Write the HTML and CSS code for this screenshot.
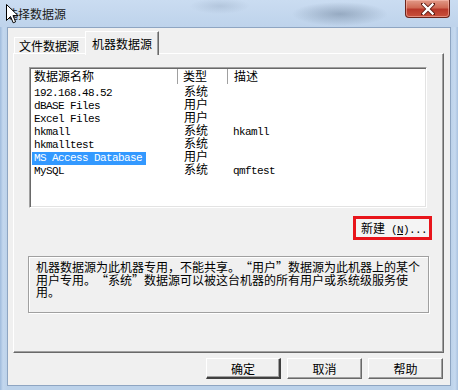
FILE: index.html
```html
<!DOCTYPE html>
<html lang="zh-CN">
<head>
<meta charset="utf-8">
<title>选择数据源</title>
<link rel="stylesheet" href="styles.css">
</head>
<body>
<div class="window">
  <div class="titlebar">
    <span class="title">选择数据源</span>
    <div class="closebtn">
      <svg width="14" height="12" viewBox="0 0 14 12">
        <path d="M2 1 L12 11 M12 1 L2 11" stroke="#5a1a12" stroke-width="4" stroke-linecap="square"/>
        <path d="M2.5 1.5 L11.5 10.5 M11.5 1.5 L2.5 10.5" stroke="#ffffff" stroke-width="2.4" stroke-linecap="square"/>
      </svg>
    </div>
    <svg class="cursor" width="13" height="20" viewBox="0 0 13 20">
      <path d="M0.5 0.5 L0.5 16.5 L4.5 12.5 L7.2 18.8 L9.6 17.8 L7 11.6 L12 11.6 Z" fill="#fff" stroke="#000" stroke-width="1"/>
    </svg>
  </div>
  <div class="client">
    <div class="tabs">
      <div class="tab">文件数据源</div>
      <div class="tab active">机器数据源</div>
    </div>
    <div class="panel">
      <div class="list">
        <div class="lhead">
          <div class="c1">数据源名称</div>
          <div class="c2">类型</div>
          <div class="c3">描述</div>
        </div>
        <div class="row"><div class="c1"><span class="a nm">192.168.48.52</span></div><div class="c2">系统</div><div class="c3"></div></div>
        <div class="row"><div class="c1"><span class="a nm">dBASE Files</span></div><div class="c2">用户</div><div class="c3"></div></div>
        <div class="row"><div class="c1"><span class="a nm">Excel Files</span></div><div class="c2">用户</div><div class="c3"></div></div>
        <div class="row"><div class="c1"><span class="a nm">hkmall</span></div><div class="c2">系统</div><div class="c3"><span class="a">hkamll</span></div></div>
        <div class="row"><div class="c1"><span class="a nm">hkmalltest</span></div><div class="c2">系统</div><div class="c3"></div></div>
        <div class="row"><div class="c1"><span class="a nm sel">MS Access Database</span></div><div class="c2">用户</div><div class="c3"></div></div>
        <div class="row"><div class="c1"><span class="a nm">MySQL</span></div><div class="c2">系统</div><div class="c3"><span class="a">qmftest</span></div></div>
      </div>
      <div class="newrow">
        <div class="newbtn">新建<span class="a"> (<u>N</u>)...</span></div>
      </div>
      <div class="desc">机器数据源为此机器专用，不能共享。<span class="qo">“</span>用户<span class="qc">”</span>数据源为此机器上的某个<br>用户专用。<span class="qo">“</span>系统<span class="qc">”</span>数据源可以被这台机器的所有用户或系统级服务使<br>用。</div>
    </div>
    <div class="buttons">
      <div class="btn default">确定</div>
      <div class="btn">取消</div>
      <div class="btn">帮助</div>
    </div>
  </div>
</div>
</body>
</html>
```

FILE: styles.css
```css
* { box-sizing: border-box; }
html, body { margin: 0; padding: 0; }
body {
  width: 458px;
  height: 390px;
  overflow: hidden;
  font-family: "Noto Sans CJK SC", sans-serif;
  font-size: 12px;
  color: #000;
  background: #bcd2ea;
}
.window {
  position: relative;
  width: 458px;
  height: 390px;
  background: linear-gradient(90deg, #9fbbdc 0px, #c3d7ee 3px, #bcd2ea 7px, #bcd2ea 451px, #c6d9ef 455px, #a9c2e0 458px);
}
.titlebar {
  position: relative;
  height: 27px;
  display: flex;
  align-items: flex-start;
  background:
    radial-gradient(ellipse 48px 12px at 340px 14px, rgba(95,115,140,0.45), rgba(95,115,140,0) 100%),
    radial-gradient(ellipse 30px 8px at 220px 6px, rgba(120,140,165,0.25), rgba(120,140,165,0) 100%),
    linear-gradient(#cadcf1, #bed3eb);
}
.title {
  margin-left: 6px;
  line-height: 27px;
  font-size: 12px;
  color: #1a1a1a;
}
.closebtn {
  margin-left: auto;
  margin-right: 8px;
  width: 45px;
  height: 18px;
  border: 1px solid #6b241b;
  border-top: none;
  border-radius: 0 0 4px 4px;
  background: linear-gradient(#e19a88 0%, #d06a55 45%, #b8382a 55%, #c9513c 100%);
  box-shadow: inset 0 0 0 1px rgba(255,200,190,0.5);
  display: flex;
  align-items: center;
  justify-content: center;
}
.cursor {
  position: absolute;
  left: 6px;
  top: 4px;
}
.client {
  margin: 0 7px;
  height: 359px;
  background: #f0f0f0;
  border: 1px solid #8ea5c2;
}
.tabs {
  height: 25px;
  display: flex;
  align-items: flex-end;
  padding-left: 6px;
}
.tab {
  position: relative;
  height: 16px;
  line-height: 15px;
  padding: 0 6px 0 4px;
  border-top: 1px solid #fff;
  border-left: 1px solid #fff;
  border-right: 2px solid #a0a0a0;
  background: #f0f0f0;
  white-space: nowrap;
}
.tab.active {
  z-index: 2;
  height: 24px;
  margin-left: -2px;
  margin-bottom: -2px;
  padding: 4px 6px 0 6px;
  border-right: 1px solid #696969;
  box-shadow: inset -1px 0 0 #a0a0a0;
}
.panel {
  position: relative;
  z-index: 1;
  margin-left: 5px;
  width: 431px;
  height: 300px;
  border-top: 1px solid #fff;
  border-left: 1px solid #fff;
  border-right: 1px solid #696969;
  border-bottom: 1px solid #696969;
  box-shadow: inset -1px -1px 0 #a0a0a0;
  padding-top: 13px;
  padding-left: 15px;
}
.list {
  width: 398px;
  height: 141px;
  background: #fff;
  border-top: 1px solid #a0a0a0;
  border-left: 1px solid #a0a0a0;
  border-right: 1px solid #fff;
  border-bottom: 1px solid #fff;
  box-shadow: inset 1px 1px 0 #696969, inset -1px -1px 0 #e3e3e3;
  padding: 1px;
}
.lhead, .row {
  display: flex;
}
.lhead {
  height: 15px;
  line-height: 13px;
}
.row {
  height: 13px;
  line-height: 13px;
}
.c1 { width: 147px; padding-left: 1px; white-space: nowrap; }
.c2 { width: 50px; padding-left: 6px; white-space: nowrap; }
.c3 { flex: 1; padding-left: 5px; white-space: nowrap; }
.lhead .c1 { padding-left: 3px; border-right: 1px solid #a0a0a0; }
.lhead .c2 { padding-left: 5px; border-right: 1px solid #a0a0a0; }
.lhead .c3 { padding-left: 6px; }
.a {
  font-family: "Liberation Mono", monospace;
  font-size: 11px;
  letter-spacing: -0.6px;
}
.nm {
  display: inline-block;
  height: 13px;
  padding: 0 4px 0 2px;
}
.sel {
  background: #3399ff;
  color: #fff;
}
.newrow {
  display: flex;
  justify-content: flex-end;
  margin-top: 8px;
  padding-right: 11px;
}
.newbtn {
  width: 79px;
  height: 24px;
  border: 3px solid #e8151b;
  background: #f4f4f4;
  line-height: 18px;
  padding-left: 5px;
  white-space: nowrap;
}
.desc {
  margin-top: 16px;
  width: 401px;
  height: 57px;
  border: 1px solid #a0a0a0;
  box-shadow: inset 1px 1px 0 #fff, 1px 1px 0 #fff;
  padding: 4px 0 0 7px;
  line-height: 12.5px;
  white-space: nowrap;
  margin-left: -1px;
}
.qo, .qc {
  display: inline-block;
  width: 12px;
}
.qo { text-align: right; }
.qc { text-align: left; }
.buttons {
  display: flex;
  justify-content: flex-end;
  gap: 6px;
  margin-top: 5px;
  padding-right: 7px;
}
.btn {
  width: 75px;
  height: 21px;
  line-height: 19px;
  text-align: center;
  background: #f0f0f0;
  border-top: 1px solid #fff;
  border-left: 1px solid #fff;
  border-right: 1px solid #696969;
  border-bottom: 1px solid #696969;
  box-shadow: inset -1px -1px 0 #a0a0a0;
}
.btn.default {
  border-right: 2px solid #404040;
  border-bottom: 2px solid #404040;
}
```
